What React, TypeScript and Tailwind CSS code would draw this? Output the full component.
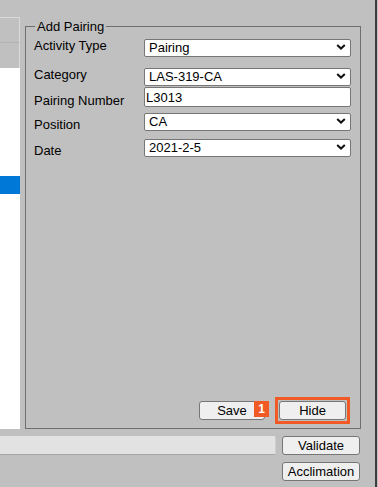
import React from 'react';

const Chevron = () => (
  <svg
    className="pointer-events-none absolute right-[5px] top-1/2 -translate-y-1/2"
    width="10"
    height="7"
    viewBox="0 0 10 7"
    fill="none"
  >
    <path d="M1.2 1.5l3.8 3.6 3.8-3.6" stroke="#111" strokeWidth="2" />
  </svg>
);

const Select = ({ value, options }: { value: string; options: string[] }) => (
  <div className="relative w-[207px] h-[18px]">
    <select
      defaultValue={value}
      className="appearance-none w-full h-full bg-white border border-[#767676] rounded-[2px] pl-[4px] pr-[18px] text-[13px] leading-[16px] text-black outline-none"
    >
      {options.map((o) => (
        <option key={o}>{o}</option>
      ))}
    </select>
    <Chevron />
  </div>
);

const Row = ({ label, pad, mt, children }: { label: string; pad: string; mt: string; children: React.ReactNode }) => (
  <div className={`flex items-start ${mt}`}>
    <div className={`w-[110px] leading-[15px] ${pad}`}>{label}</div>
    {children}
  </div>
);

const btn =
  'bg-[#efefef] border border-[#767676] rounded-[3px] text-[13px] leading-[15px] text-black flex items-center justify-center';

export default function App() {
  return (
    <div className="w-[378px] h-[487px] bg-[#c0c0c0] flex font-['Liberation_Sans',Arial,sans-serif] text-[13px] text-black overflow-hidden">
      <div className="w-[375px] flex flex-col">
        <div className="flex h-[429px]">
          {/* list panel */}
          <div className="w-[20px] pt-[17px] flex flex-col">
            <div className="h-[26px] border-t border-r border-b border-t-[#dadada] border-r-[#dadada] border-b-[#b4b4b4]" />
            <div className="h-[25px] border-r border-r-[#dadada]" />
            <div className="flex-1 bg-white pt-[108px]">
              <div className="h-[18px] bg-[#0078d7]" />
            </div>
          </div>

          <fieldset className="ml-[5px] mt-[19px] w-[336px] h-[410px] border border-[#6f6f6f] pl-[8px] pr-[8px] pb-[8px]">
            <legend className="ml-[1px] px-[2px] leading-[15px]">Add Pairing</legend>
            <div className="h-[386px] flex flex-col">
              <Row label="Activity Type" pad="pt-0" mt="mt-[4px]">
                <Select value="Pairing" options={['Pairing']} />
              </Row>
              <Row label="Category" pad="pt-0" mt="mt-[11px]">
                <Select value="LAS-319-CA" options={['LAS-319-CA']} />
              </Row>
              <Row label="Pairing Number" pad="pt-[6px]" mt="mt-[2px]">
                <input
                  defaultValue="L3013"
                  className="w-[207px] h-[20px] bg-white border border-[#767676] rounded-[2px] pl-[1px] text-[13px] text-black outline-none"
                />
              </Row>
              <Row label="Position" pad="pt-[5px]" mt="mt-[4px]">
                <Select value="CA" options={['CA']} />
              </Row>
              <Row label="Date" pad="pt-[5px]" mt="mt-[6px]">
                <Select value="2021-2-5" options={['2021-2-5']} />
              </Row>

              <div className="mt-auto flex justify-end gap-[14px] pr-[6px]">
                <button className={`${btn} w-[66px] h-[19px]`}>Save</button>
                <div className="relative">
                  <button className={`${btn} w-[67px] h-[19px]`}>Hide</button>
                  {/* highlight frame and step badge */}
                  <span className="pointer-events-none absolute left-[-4px] top-[-4px] right-[-4px] bottom-[-4px] border-[3px] border-[#f15a24]" />
                  <span className="absolute left-[-25px] top-0 w-[15px] h-[16px] bg-[#f15a24] text-white font-bold text-[12px] leading-[16px] flex items-center justify-center">
                    1
                  </span>
                </div>
              </div>
            </div>
          </fieldset>
        </div>

        <div className="flex items-start gap-[6px] mt-[7px]">
          <div className="w-[276px] h-[19px] bg-[#e2e2e2] border-b border-r border-b-[#a5a5a5] border-r-[#cfcfcf] rounded-r-[2px]" />
          <button className={`${btn} w-[78px] h-[19px]`}>Validate</button>
        </div>
        <div className="flex justify-start pl-[282px] mt-[7px]">
          <button className={`${btn} w-[78px] h-[19px] whitespace-nowrap`}>Acclimation</button>
        </div>
      </div>
      <div className="w-[2px] bg-[#3d3d3d]" />
      <div className="w-[1px]" />
    </div>
  );
}
